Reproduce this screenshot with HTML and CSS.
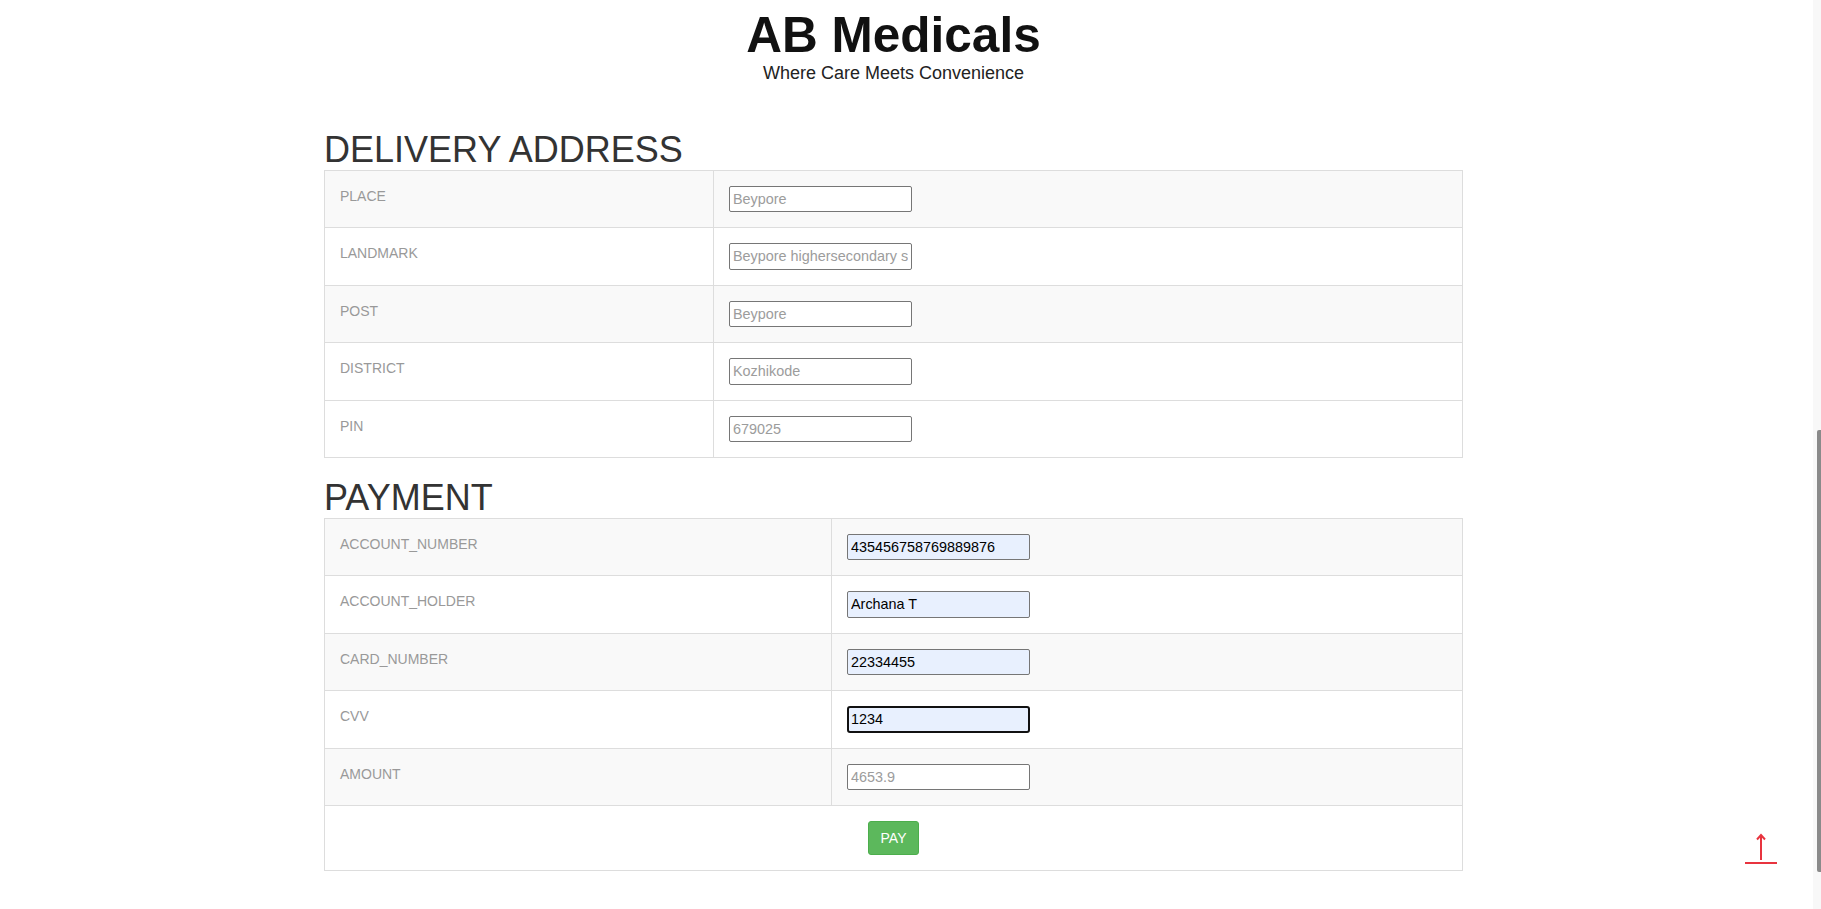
FILE: index.html
```html
<!DOCTYPE html>
<html lang="en">
<head>
<meta charset="utf-8">
<title>AB Medicals - Checkout</title>
<link rel="stylesheet" href="styles.css">
</head>
<body>
<div class="page">
  <header class="brand">
    <h1 class="brand-title">AB Medicals</h1>
    <p class="brand-tag">Where Care Meets Convenience</p>
  </header>
  <main class="container">
    <h2 class="section-title">DELIVERY ADDRESS</h2>
    <table class="form-table delivery">
      <colgroup><col class="col-label"><col></colgroup>
      <tr><td class="label">PLACE</td><td><input class="field" type="text" placeholder="Beypore"></td></tr>
      <tr><td class="label">LANDMARK</td><td><input class="field" type="text" placeholder="Beypore highersecondary school"></td></tr>
      <tr><td class="label">POST</td><td><input class="field" type="text" placeholder="Beypore"></td></tr>
      <tr><td class="label">DISTRICT</td><td><input class="field" type="text" placeholder="Kozhikode"></td></tr>
      <tr><td class="label">PIN</td><td><input class="field" type="text" placeholder="679025"></td></tr>
    </table>
    <h2 class="section-title">PAYMENT</h2>
    <table class="form-table payment">
      <colgroup><col class="col-label"><col></colgroup>
      <tr><td class="label">ACCOUNT_NUMBER</td><td><input class="field filled" type="text" value="435456758769889876"></td></tr>
      <tr><td class="label">ACCOUNT_HOLDER</td><td><input class="field filled" type="text" value="Archana T"></td></tr>
      <tr><td class="label">CARD_NUMBER</td><td><input class="field filled" type="text" value="22334455"></td></tr>
      <tr><td class="label">CVV</td><td><input class="field filled focused" type="text" value="1234"></td></tr>
      <tr><td class="label">AMOUNT</td><td><input class="field" type="text" placeholder="4653.9"></td></tr>
      <tr><td class="action" colspan="2"><button class="btn-pay" type="button">PAY</button></td></tr>
    </table>
  </main>
</div>
<a class="to-top" href="#" aria-label="Back to top">
  <svg width="34" height="34" viewBox="0 0 34 34" fill="none" stroke="#e8343f" stroke-width="2">
    <path d="M17 3 V28"/>
    <path d="M13 7.5 L17 3 L21 7.5"/>
    <path d="M1 31 H33"/>
  </svg>
</a>
<div class="scrollbar"><div class="scrollbar-thumb"></div></div>
</body>
</html>
```
FILE: styles.css
```css
html, body {
  margin: 0;
  padding: 0;
  background: #ffffff;
}
body {
  font-family: "Liberation Sans", Arial, sans-serif;
  font-size: 14px;
  line-height: 20px;
  color: #333333;
}
.page {
  width: 1787px;
}
.brand {
  text-align: center;
  padding-top: 10px;
}
.brand-title {
  margin: 0;
  font-size: 49.5px;
  line-height: 49px;
  font-weight: 700;
  color: #111111;
}
.brand-tag {
  margin: 4px 0 0;
  font-size: 18px;
  line-height: 20px;
  color: #222222;
}
.container {
  width: 1139px;
  margin: 0 auto;
  padding-top: 47px;
}
.section-title {
  margin: 20px 0 0;
  font-size: 36px;
  line-height: 39.6px;
  font-weight: 400;
  color: #333333;
}
.section-title:first-child {
  margin-top: 0;
}
.form-table {
  width: 100%;
  border-collapse: collapse;
  table-layout: fixed;
  border: 1px solid #dddddd;
}
.form-table td {
  border: 1px solid #dddddd;
  padding: 15px;
  vertical-align: top;
}
.form-table tr:nth-child(odd) td {
  background: #f9f9f9;
}
.delivery .col-label {
  width: 389px;
}
.payment .col-label {
  width: 507px;
}
.label {
  color: #999999;
  font-size: 14px;
}
.field {
  display: block;
  box-sizing: border-box;
  width: 183px;
  height: 26.5px;
  margin: 0;
  padding: 0 3px;
  border: 1px solid #767676;
  border-radius: 2px;
  background: #ffffff;
  font-family: "Liberation Sans", Arial, sans-serif;
  font-size: 14.4px;
  color: #000000;
  outline: none;
}
.field::placeholder {
  color: #9c9c9c;
}
.field.filled {
  background: #e8f0fe;
}
.field.focused {
  border: 2px solid #111111;
  border-radius: 3px;
  padding: 0 2px;
}
.action {
  text-align: center;
}
.form-table tr:last-child td {
  background: #ffffff;
}
.btn-pay {
  display: inline-block;
  height: 34px;
  padding: 6px 12px;
  margin: 0;
  border: 1px solid #4cae4c;
  border-radius: 3px;
  background: #5cb85c;
  color: #ffffff;
  font-family: "Liberation Sans", Arial, sans-serif;
  font-size: 14px;
  line-height: 20px;
}
.to-top {
  position: fixed;
  left: 1744px;
  top: 832px;
  display: block;
  width: 34px;
  height: 34px;
}
.to-top svg {
  display: block;
}
.scrollbar {
  position: fixed;
  top: 0;
  right: 0;
  width: 8px;
  height: 909px;
  background: #f8f8f8;
}
.scrollbar-thumb {
  position: absolute;
  right: 0;
  top: 430px;
  width: 4px;
  height: 442px;
  border-radius: 2px 0 0 2px;
  background: #8a8a8a;
}
```
